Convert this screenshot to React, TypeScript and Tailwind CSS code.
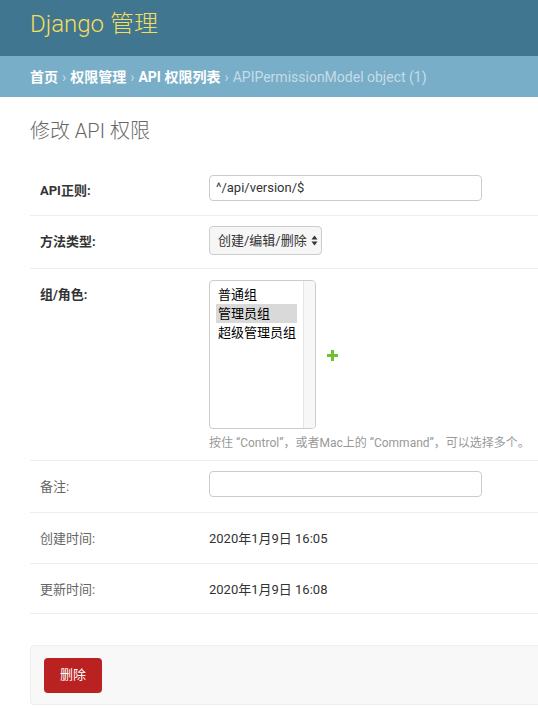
const font = "font-['Roboto','Noto_Sans_CJK_SC',sans-serif]";

function Row({ label, bold, children, className = '' }: { label: string; bold?: boolean; children: React.ReactNode; className?: string }) {
    return (
        <div className={`flex border-b border-[#eee] px-[10px] ${className}`}>
            <div className={`w-[169px] shrink-0 pt-[16px] text-[13px] ${bold ? 'font-bold text-[#333]' : 'text-[#666]'}`}>
                {label}
            </div>
            <div className="flex-1">{children}</div>
        </div>
    );
}

export default function App() {
    return (
        <div className={`min-h-[711px] w-[538px] overflow-hidden bg-white ${font}`}>
            {/* Header */}
            <div className="h-[56px] bg-[#417690] px-[30px] pt-[6px]">
                <h1 className="text-[24px] font-light text-[#f5dd5d]">Django 管理</h1>
            </div>

            {/* Breadcrumbs */}
            <div className="flex h-[41px] items-center bg-[#79aec8] px-[30px] pt-[2px] text-[14px] text-[#c4dce8]">
                <span className="font-bold text-white">首页</span>
                <span className="mx-[4px]">›</span>
                <span className="font-bold text-white">权限管理</span>
                <span className="mx-[4px]">›</span>
                <span className="font-bold text-white">API 权限列表</span>
                <span className="mx-[4px]">›</span>
                <span>APIPermissionModel object (1)</span>
            </div>

            {/* Content */}
            <div className="pl-[30px]">
                <h2 className="pt-[19px] text-[20px] font-light text-[#666]">修改 API 权限</h2>

                <div className="mt-[19px] w-[540px]">
                    <Row label="API正则:" bold className="h-[51px]">
                        <div className="pt-[10px]">
                            <div className="flex h-[26px] w-[273px] items-center rounded-[4px] border border-[#ccc] px-[6px] text-[13px] text-[#333]">
                                ^/api/version/$
                            </div>
                        </div>
                    </Row>

                    <Row label="方法类型:" bold className="h-[53px]">
                        <div className="pt-[10px]">
                            <div className="flex h-[29px] w-[113px] items-center gap-[3px] rounded-[4px] border border-[#ccc] bg-[#f6f6f6] pl-[8px] text-[13px] text-[#333]">
                                创建/编辑/删除
                                <svg width="7" height="11" viewBox="0 0 7 11" className="ml-[1px]">
                                    <path d="M3.5 0.5 L6.5 4.5 H0.5 Z" fill="#333" />
                                    <path d="M3.5 10.5 L6.5 6.5 H0.5 Z" fill="#333" />
                                </svg>
                            </div>
                        </div>
                    </Row>

                    <Row label="组/角色:" bold className="h-[192px]">
                        <div className="pt-[11px]">
                            <div className="flex items-center">
                                <div className="flex h-[149px] w-[107px] overflow-hidden rounded-[4px] border border-[#ccc] text-[13px] text-[#000]">
                                    <div className="flex-1 pl-[6px] pr-[6px] pt-[4px] leading-[19px]">
                                        <div className="pl-[2px]">普通组</div>
                                        <div className="bg-[#d9d9d9] pl-[2px]">管理员组</div>
                                        <div className="pl-[2px] whitespace-nowrap">超级管理员组</div>
                                    </div>
                                    <div className="w-[12px] shrink-0 border-l border-[#e5e5e5] bg-[#f7f7f7]" />
                                </div>
                                <svg width="11" height="11" viewBox="0 0 11 11" className="ml-[11px] mt-[1px]">
                                    <path d="M4 0 H7 V4 H11 V7 H7 V11 H4 V7 H0 V4 H4 Z" fill="#70bf2b" />
                                </svg>
                            </div>
                            <p className="mt-[5px] whitespace-nowrap text-[12px] text-[#999]">
                                按住 “Control”，或者Mac上的 “Command”，可以选择多个。
                            </p>
                        </div>
                    </Row>

                    <Row label="备注:" className="h-[52px]">
                        <div className="pt-[10px]">
                            <div className="h-[26px] w-[273px] rounded-[4px] border border-[#ccc]" />
                        </div>
                    </Row>

                    <Row label="创建时间:" className="h-[51px]">
                        <div className="pt-[16px] text-[13px] text-[#333]">2020年1月9日 16:05</div>
                    </Row>

                    <Row label="更新时间:" className="h-[50px]">
                        <div className="pt-[16px] text-[13px] text-[#333]">2020年1月9日 16:08</div>
                    </Row>
                </div>

                {/* Submit row */}
                <div className="mt-[31px] flex h-[60px] w-[540px] items-center rounded-[4px] border border-[#eee] bg-[#f8f8f8] pl-[13px]">
                    <button className="flex h-[35px] w-[58px] items-center justify-center rounded-[4px] bg-[#ba2121] text-[13px] text-white">
                        删除
                    </button>
                </div>
            </div>
        </div>
    );
}
